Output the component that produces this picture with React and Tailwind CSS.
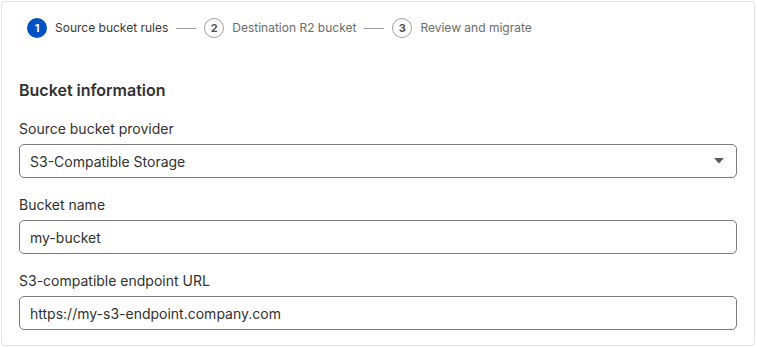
import React from "react";

function Step({num, label, active}) {
    return (
        <div className="flex items-center">
            {active ? (
                <div className="flex h-[20px] w-[20px] items-center justify-center rounded-full bg-[#0051c3] text-[11px] font-bold text-white">{num}</div>
            ) : (
                <div className="flex h-[20px] w-[20px] items-center justify-center rounded-full border border-[#a0a0a0] text-[11px] font-bold text-[#505050]">{num}</div>
            )}
            <span className={"ml-[8px] text-[12px] " + (active ? "text-[#36393a]" : "text-[#6b6b6b]")}>{label}</span>
        </div>
    );
}

function Line() {
    return <div className="mx-[8px] h-px w-[20px] bg-[#9a9a9a]" />;
}

function Field({label, value, select}) {
    return (
        <div className="flex flex-col">
            <label className="text-[14px] leading-[18px] text-[#313131]">{label}</label>
            <div className="mt-[6px] flex h-[34px] items-center justify-between rounded-[5px] border border-[#7b7b7b] bg-white px-[10px] text-[14px] text-[#313131]">
                <span>{value}</span>
                {select && (
                    <svg width="10" height="6" viewBox="0 0 10 6" className="mr-[2px]">
                        <path d="M0 0h10L5 5.5z" fill="#5a5a5a" />
                    </svg>
                )}
            </div>
        </div>
    );
}

export default function App() {
    return (
        <div className="h-[348px] w-[757px] bg-white p-px" style={{fontFamily: "Inter, 'Noto Sans', sans-serif"}}>
            <div className="h-[345px] w-[754px] rounded-[4px] border border-[#e3e3e3] bg-white">
                <div className="flex items-center pl-[25px] pt-[16px]">
                    <Step num="1" label="Source bucket rules" active />
                    <Line />
                    <Step num="2" label="Destination R2 bucket" />
                    <Line />
                    <Step num="3" label="Review and migrate" />
                </div>
                <div className="px-[17px] pt-[42px]">
                    <h2 className="text-[16px] font-semibold leading-[20px] text-[#313131]">Bucket information</h2>
                    <div className="mt-[20px] flex flex-col gap-[18px]">
                        <Field label="Source bucket provider" value="S3-Compatible Storage" select />
                        <Field label="Bucket name" value="my-bucket" />
                        <Field label="S3-compatible endpoint URL" value="https://my-s3-endpoint.company.com" />
                    </div>
                </div>
            </div>
        </div>
    );
}
